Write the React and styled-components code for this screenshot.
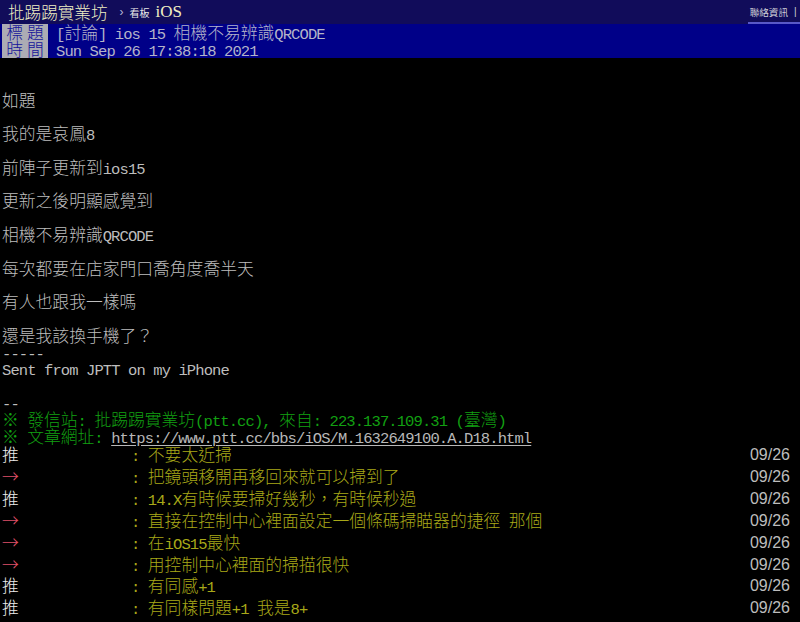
import React from "react";
import styled, { createGlobalStyle } from "styled-components";

const CJK = `"Noto Sans CJK TC", "Noto Sans CJK SC", sans-serif`;

const GlobalStyle = createGlobalStyle`
  html, body {
    margin: 0;
    padding: 0;
    background: #000;
  }
  body {
    overflow: hidden;
    font-family: ${CJK};
  }
`;

const body = [
  "",
  "",
  "如題",
  "",
  "我的是哀鳳8",
  "",
  "前陣子更新到ios15",
  "",
  "更新之後明顯感覺到",
  "",
  "相機不易辨識QRCODE",
  "",
  "每次都要在店家門口喬角度喬半天",
  "",
  "有人也跟我一樣嗎",
  "",
  "還是我該換手機了？",
  "-----",
  "Sent from JPTT on my iPhone",
  "",
  "--",
];

const pushes = [
  { tag: "推", text: "不要太近掃" },
  { tag: "→", text: "把鏡頭移開再移回來就可以掃到了" },
  { tag: "推", text: "14.X有時候要掃好幾秒，有時候秒過" },
  { tag: "→", text: "直接在控制中心裡面設定一個條碼掃瞄器的捷徑 那個" },
  { tag: "→", text: "在iOS15最快" },
  { tag: "→", text: "用控制中心裡面的掃描很快" },
  { tag: "推", text: "有同感+1" },
  { tag: "推", text: "有同樣問題+1 我是8+" },
];

// ascii runs get the half-width mono face, the rest stays CJK
function Mixed({ text }) {
  const parts = text.split(/([\x20-\x7e]+)/).filter(Boolean);
  return parts.map((p, i) =>
    /^[\x20-\x7e]+$/.test(p) ? <Ascii key={i}>{p}</Ascii> : <span key={i}>{p}</span>
  );
}

export default function App() {
  return (
    <>
      <GlobalStyle />
      <TopBar>
        <Brand>批踢踢實業坊</Brand>
        <Crumb>›</Crumb>
        <BoardLabel>看板</BoardLabel>
        <BoardName>iOS</BoardName>
        <NavLink>聯絡資訊</NavLink>
        <NavCut>|</NavCut>
      </TopBar>

      <MetaLine>
        <MetaTag>標題</MetaTag>
        <MetaValue>
          <Mixed text="[討論] ios 15 相機不易辨識QRCODE" />
        </MetaValue>
      </MetaLine>
      <MetaLine>
        <MetaTag>時間</MetaTag>
        <MetaValue>
          <Mixed text="Sun Sep 26 17:38:18 2021" />
        </MetaValue>
      </MetaLine>

      <Content>
        {body.map((line, i) => (
          <Line key={i}>{line ? <Mixed text={line} /> : "\u00a0"}</Line>
        ))}
        <Line $tone="green">
          <Mixed text="※ 發信站: 批踢踢實業坊(ptt.cc), 來自: 223.137.109.31 (臺灣)" />
        </Line>
        <Line $tone="green">
          <Mixed text="※ 文章網址: " />
          <UrlLink>
            <Ascii>https://www.ptt.cc/bbs/iOS/M.1632649100.A.D18.html</Ascii>
          </UrlLink>
        </Line>

        {pushes.map((p, i) => (
          <Push key={i}>
            <PushTag $arrow={p.tag === "→"}>{p.tag}</PushTag>
            <PushContent>
              <Mixed text={": " + p.text} />
            </PushContent>
            <PushTime>09/26</PushTime>
          </Push>
        ))}
      </Content>
    </>
  );
}

const Ascii = styled.span`
  font-family: "Liberation Mono", "DejaVu Sans Mono", monospace;
  font-size: 15.5px;
  letter-spacing: -0.9px;
`;

const TopBar = styled.div`
  display: flex;
  align-items: center;
  height: 24px;
  padding-left: 8px;
  background: #110c5a;
  overflow: hidden;
`;

const Brand = styled.span`
  font-family: ${CJK};
  font-size: 16.6px;
  font-weight: 300;
  line-height: 24px;
  color: #f0f0c4;
`;

const Crumb = styled.span`
  margin-left: 12px;
  font-family: "Liberation Sans", sans-serif;
  font-size: 12px;
  color: #b8b8d8;
`;

const BoardLabel = styled.span`
  margin-left: 6px;
  font-size: 10px;
  color: #e8e8e8;
`;

const BoardName = styled.span`
  margin-left: 6px;
  font-family: "Liberation Serif", serif;
  font-size: 17px;
  color: #f0f0c4;
`;

const NavLink = styled.span`
  margin-left: auto;
  align-self: stretch;
  display: flex;
  align-items: center;
  box-sizing: border-box;
  padding-top: 1px;
  padding-left: 2px;
  border-bottom: 2px solid #5858c8;
  font-size: 9.6px;
  color: #d0d0d8;
  padding-right: 6px;
`;

const NavCut = styled.span`
  align-self: stretch;
  display: flex;
  align-items: center;
  box-sizing: border-box;
  border-bottom: 2px solid #5858c8;
  font-family: "Liberation Sans", sans-serif;
  font-size: 10px;
  color: #d0d0d8;
  width: 6px;
`;

const MetaLine = styled.div`
  display: flex;
  height: 17px;
  background: #000088;
  line-height: 17px;
`;

const MetaTag = styled.span`
  width: 46px;
  margin-left: 2px;
  background: #acacb4;
  color: #14149a;
  font-size: 16.8px;
  font-weight: 300;
  letter-spacing: 4px;
  text-indent: 4px;
  text-align: center;
`;

const MetaValue = styled.span`
  padding-left: 8px;
  color: #b4b4c8;
  font-size: 16.8px;
  font-weight: 300;
  white-space: pre;
`;

const Content = styled.div`
  padding-left: 2px;
  font-size: 16.8px;
  font-weight: 300;
  color: #bdbdbd;
`;

const Line = styled.div`
  height: 16.8px;
  line-height: 16.8px;
  white-space: pre;
  color: ${(p) => (p.$tone === "green" ? "#12a012" : "#bdbdbd")};
`;

const UrlLink = styled.span`
  color: #b8b8b8;
  text-decoration: underline;
  text-underline-offset: 2px;
`;

const Push = styled.div`
  display: flex;
  height: 21.86px;
  line-height: 21.86px;
  white-space: pre;
`;

const PushTag = styled.span`
  width: 129px;
  flex: none;
  color: ${(p) => (p.$arrow ? "#e0506a" : "#ececec")};
`;

const PushContent = styled.span`
  color: #a8a818;
`;

const PushTime = styled.span`
  margin-left: auto;
  padding-right: 10px;
  font-family: "Liberation Sans", sans-serif;
  font-size: 16px;
  color: #bdbdbd;
`;
